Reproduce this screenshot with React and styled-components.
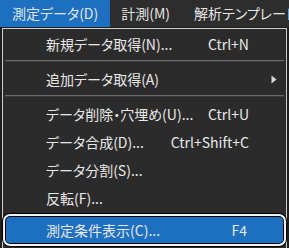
import styled, { createGlobalStyle } from "styled-components";

const GlobalStyle = createGlobalStyle`
    html, body {
        margin: 0;
        padding: 0;
        background: #1e1e1e;
    }
    body {
        font-family: "Noto Sans CJK JP", "Noto Sans", sans-serif;
        font-feature-settings: "palt";
    }
`;

const Screen = styled.div`
    width: 289px;
    height: 248px;
    overflow: hidden;
    display: flex;
    flex-direction: column;
    background: #1e1e1e;
`;

const MenuBar = styled.div`
    display: flex;
    height: 27px;
    background: #2d2d2d;
    flex-shrink: 0;
`;

const BarItem = styled.div`
    padding: 0 ${({$pad = 11}) => $pad}px;
    line-height: 27px;
    font-size: 14px;
    color: #e4e4e4;
    white-space: nowrap;
    background: ${({$active}) => $active ? '#1d6fc0' : 'transparent'};
`;

const Panel = styled.div`
    margin: 1px 0 0 2px;
    width: 283px;
    flex: 1;
    border: 1px solid #cfcfcf;
    border-bottom: none;
    background: #2b2b2b;
    padding-top: 1px;
    display: flex;
    flex-direction: column;
`;

const Item = styled.div`
    display: flex;
    align-items: center;
    height: 28px;
    padding-left: 43px;
    font-size: 14px;
    color: #e8e8e8;
    white-space: nowrap;
`;

const Label = styled.span`
    flex: 1;
`;

const Shortcut = styled.span`
    text-align: right;
`;

const Tail = styled.span`
    width: 37px;
    display: flex;
    align-items: center;
    padding-left: 22px;
    box-sizing: border-box;
`;

const Separator = styled.div`
    height: 2px;
    margin: 2px 2px 3px;
    background: #6b6b6b;
    border-bottom: 1px solid #3a3a3a;
    box-sizing: border-box;
`;

const Highlight = styled(Item)`
    height: 32px;
    margin: 2px 0 0 0;
    padding-left: 41px;
    box-sizing: border-box;
    border: 2px solid #f2f2f2;
    border-radius: 7px;
    background: #1d6fc0;
    box-shadow: 0 0 0 1px #000, inset 0 0 0 1px #000;
`;

const SubArrow = () => (
    <svg width="6" height="9" viewBox="0 0 6 9">
        <path d="M0.5 0.5L5.5 4.5L0.5 8.5Z" fill="#d8d8d8"/>
    </svg>
);

const MenuRow = ({label, shortcut, sub}) => (
    <Item>
        <Label>{label}</Label>
        {shortcut && <Shortcut>{shortcut}</Shortcut>}
        <Tail>{sub && <SubArrow/>}</Tail>
    </Item>
);

export default function App() {
    return (
        <>
            <GlobalStyle/>
            <Screen>
                <MenuBar>
                    <BarItem $active $pad={12}>測定データ(D)</BarItem>
                    <BarItem $pad={11}>計測(M)</BarItem>
                    <BarItem $pad={13}>解析テンプレート</BarItem>
                </MenuBar>
                <Panel>
                    <MenuRow label="新規データ取得(N)..." shortcut="Ctrl+N"/>
                    <Separator/>
                    <MenuRow label="追加データ取得(A)" sub/>
                    <Separator/>
                    <MenuRow label="データ削除・穴埋め(U)..." shortcut="Ctrl+U"/>
                    <MenuRow label="データ合成(D)..." shortcut="Ctrl+Shift+C"/>
                    <MenuRow label="データ分割(S)..."/>
                    <MenuRow label="反転(F)..."/>
                    <Highlight>
                        <Label>測定条件表示(C)...</Label>
                        <Shortcut>F4</Shortcut>
                        <Tail/>
                    </Highlight>
                </Panel>
            </Screen>
        </>
    );
}
